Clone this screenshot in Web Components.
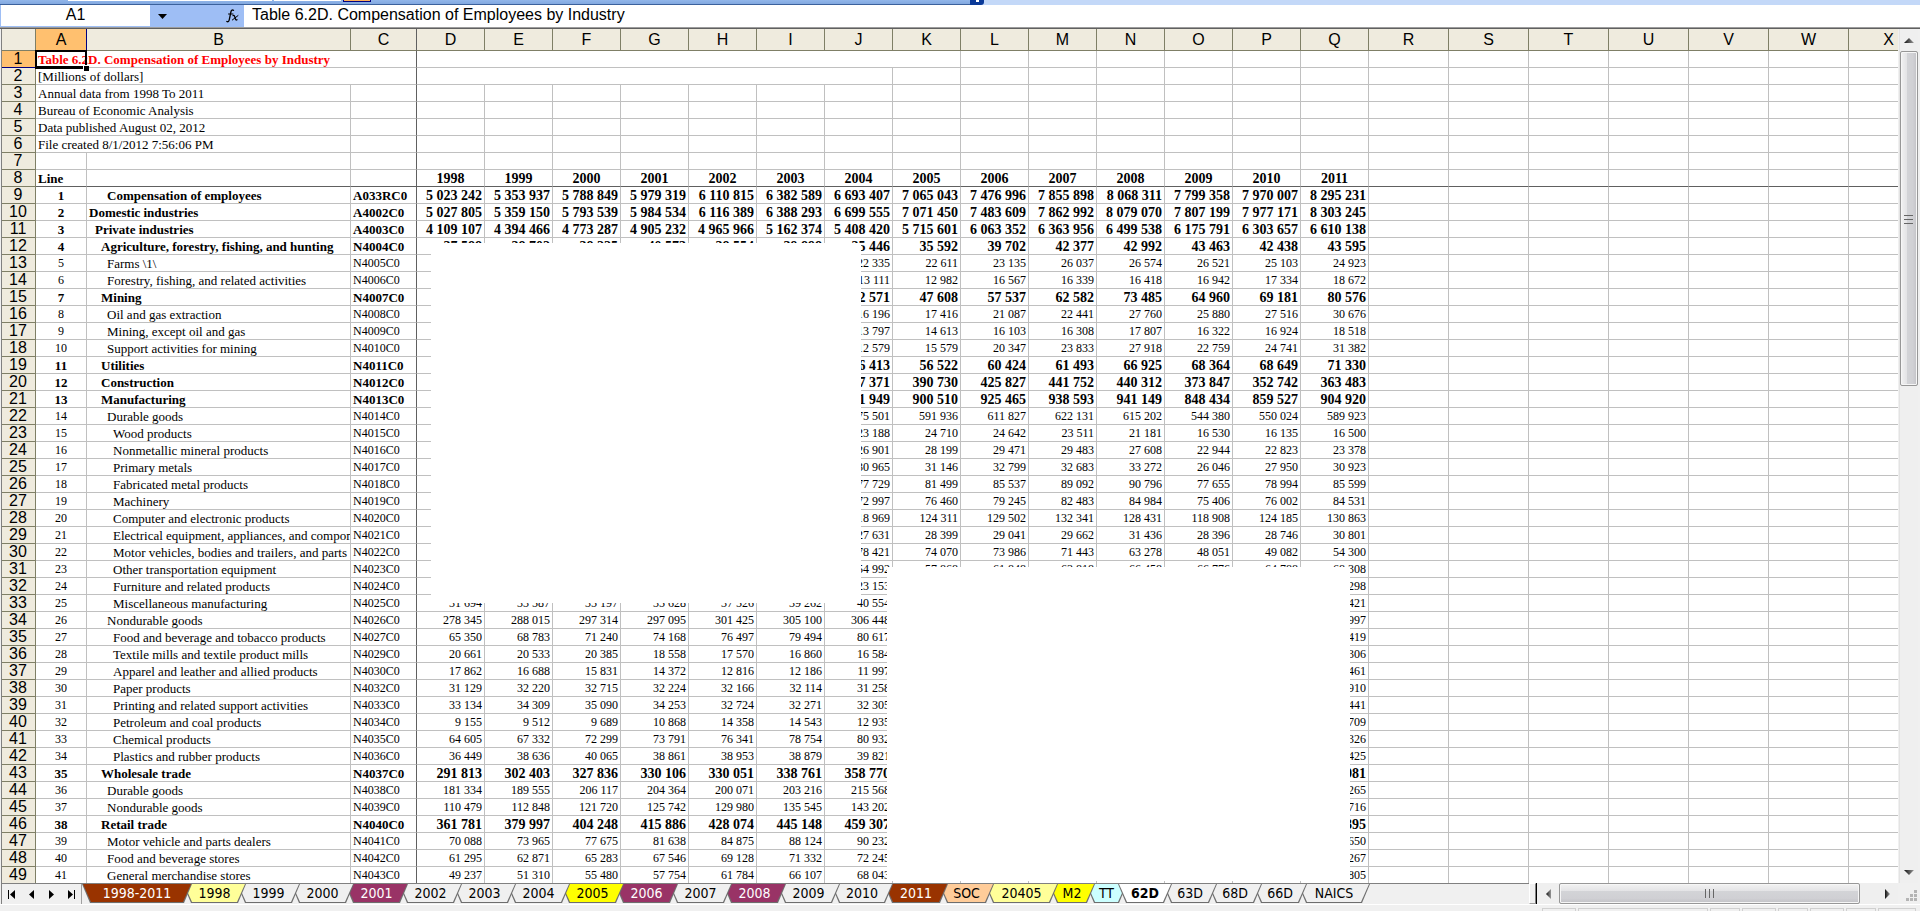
<!DOCTYPE html>
<html lang="en">
<head>
<meta charset="utf-8">
<title>Table 6.2D. Compensation of Employees by Industry</title>
<style>
  html, body { margin: 0; height: 100%; }
  body { background: #f0f0f0; overflow: hidden; font-family: "Liberation Sans", Arial, sans-serif; }
</style>
</head>
<body>
<workbook-window></workbook-window>

<script>
const define = (name, html, setup) => customElements.define(name, class extends HTMLElement {
  connectedCallback() {
    if (this.shadowRoot) return;
    const root = this.attachShadow({ mode: 'open' });
    root.innerHTML = typeof html === 'function' ? html(this) : html;
    if (setup) setup(root, this);
  }
});

/* ---------- bottom edge of the docked toolbar ---------- */
define('toolbar-edge', `
<style>
  :host { display: flex; height: 5px; background: #c3d8f8; }
  .dock { display: flex; align-items: flex-start; box-sizing: border-box; width: 970px; padding-left: 68px; gap: 2px;
          background: linear-gradient(#92b6ea, #82a8e0); border-bottom: 1px solid #3b619c; }
  .field { width: 204px; height: 1px; background: #fff; }
  .field.short { width: 67px; }
  .hot { box-sizing: border-box; width: 28px; height: 2px; background: #ffb05c; border: 1px solid #000080; border-top: 0; }
  .cap { width: 14px; background: #0b3a98; border-radius: 0 0 3px 0; display: flex; justify-content: center; }
  .cap i { width: 3px; height: 2px; background: #fff; }
</style>
<div class="dock"><span class="field"></span><span class="field short"></span><span class="hot"></span></div>
<div class="cap"><i></i></div>`);

/* ---------- name box and formula line ---------- */
define('formula-bar', `
<style>
  :host { display: flex; height: 22px; background: #9ebef5; border-bottom: 1px solid #9c9c9c; box-shadow: 0 1px 0 #606060; margin-bottom: 1px; }
  input { box-sizing: border-box; border: 0; border-radius: 0; outline: 0; margin: 0; background: #fff; color: #000;
          font: 16px/20px "Liberation Sans", Arial, sans-serif; }
  .name { width: 149px; height: 21px; margin-left: 1px; padding: 0 0 1px; text-align: center; }
  .text { flex: 1; min-width: 0; height: 22px; padding: 0 8px 2px; }
  button { border: 0; padding: 0; background: none; display: grid; place-items: center; }
  .drop { width: 24px; }
  .fx { width: 26px; margin-left: 44px; padding-left: 4px; }
</style>
<input class="name" aria-label="Name box" value="A1">
<button class="drop" aria-label="Open name list"><svg width="9" height="5" viewBox="0 0 9 5"><path d="M0 0h9L4.500 5z"/></svg></button>
<button class="fx" aria-label="Insert function"><svg width="14" height="14" viewBox="0 0 14 14" fill="none" stroke="#000" stroke-linecap="round">
  <path stroke-width="1.300" d="M7.500 1.300C6 .4 5.200 1.500 4.900 3L3.300 10.500C3 12.300 2 13.200.8 12.500"/>
  <path d="M2.500 5h4.500"/><path stroke-width="1.300" d="M7.100 6.600c1-.5 1.400 0 1.900 2s.9 2.900 2 2.200"/><path d="M12 6.600L6.300 11"/></svg></button>
<input class="text" aria-label="Formula" value="Table 6.2D. Compensation of Employees by Industry">`);

/* ---------- worksheet ---------- */
const COLS = 'ABCDEFGHIJKLMNOPQRSTUVWX'.split('');
const YEARS = Array.from({ length: 14 }, (_, i) => 1998 + i);
// label | code | indent | bold | values from column D on
const DATA = `
Compensation of employees|A033RC0|3|b|5 023 242,5 353 937,5 788 849,5 979 319,6 110 815,6 382 589,6 693 407,7 065 043,7 476 996,7 855 898,8 068 311,7 799 358,7 970 007,8 295 231
Domestic industries|A4002C0|0|b|5 027 805,5 359 150,5 793 539,5 984 534,6 116 389,6 388 293,6 699 555,7 071 450,7 483 609,7 862 992,8 079 070,7 807 199,7 977 171,8 303 245
Private industries|A4003C0|1|b|4 109 107,4 394 466,4 773 287,4 905 232,4 965 966,5 162 374,5 408 420,5 715 601,6 063 352,6 363 956,6 499 538,6 175 791,6 303 657,6 610 138
Agriculture, forestry, fishing, and hunting|N4004C0|2|b|37 588,38 702,38 225,40 573,38 554,39 898,35 446,35 592,39 702,42 377,42 992,43 463,42 438,43 595
Farms \\1\\|N4005C0|3||,,,,,,22 335,22 611,23 135,26 037,26 574,26 521,25 103,24 923
Forestry, fishing, and related activities|N4006C0|3||,,,,,,13 111,12 982,16 567,16 339,16 418,16 942,17 334,18 672
Mining|N4007C0|2|b|,,,,,,42 571,47 608,57 537,62 582,73 485,64 960,69 181,80 576
Oil and gas extraction|N4008C0|3||,,,,,,16 196,17 416,21 087,22 441,27 760,25 880,27 516,30 676
Mining, except oil and gas|N4009C0|3||,,,,,,13 797,14 613,16 103,16 308,17 807,16 322,16 924,18 518
Support activities for mining|N4010C0|3||,,,,,,12 579,15 579,20 347,23 833,27 918,22 759,24 741,31 382
Utilities|N4011C0|2|b|,,,,,,56 413,56 522,60 424,61 493,66 925,68 364,68 649,71 330
Construction|N4012C0|2|b|,,,,,,367 371,390 730,425 827,441 752,440 312,373 847,352 742,363 483
Manufacturing|N4013C0|2|b|,,,,,,891 949,900 510,925 465,938 593,941 149,848 434,859 527,904 920
Durable goods|N4014C0|3||,,,,,,575 501,591 936,611 827,622 131,615 202,544 380,550 024,589 923
Wood products|N4015C0|4||,,,,,,23 188,24 710,24 642,23 511,21 181,16 530,16 135,16 500
Nonmetallic mineral products|N4016C0|4||,,,,,,26 901,28 199,29 471,29 483,27 608,22 944,22 823,23 378
Primary metals|N4017C0|4||,,,,,,30 965,31 146,32 799,32 683,33 272,26 046,27 950,30 923
Fabricated metal products|N4018C0|4||,,,,,,77 729,81 499,85 537,89 092,90 796,77 655,78 994,85 599
Machinery|N4019C0|4||,,,,,,72 997,76 460,79 245,82 483,84 984,75 406,76 002,84 531
Computer and electronic products|N4020C0|4||,,,,,,118 969,124 311,129 502,132 341,128 431,118 908,124 185,130 863
Electrical equipment, appliances, and components|N4021C0|4||,,,,,,27 631,28 399,29 041,29 662,31 436,28 396,28 746,30 801
Motor vehicles, bodies and trailers, and parts|N4022C0|4||,,,,,,78 421,74 070,73 986,71 443,63 278,48 051,49 082,54 300
Other transportation equipment|N4023C0|4||,,,,,,54 992,57 868,61 848,63 818,66 458,66 776,64 788,68 308
Furniture and related products|N4024C0|4||,,,,,,23 153,,,,,,,298
Miscellaneous manufacturing|N4025C0|4||31 694,33 587,35 197,35 628,37 526,39 262,40 554,,,,,,,421
Nondurable goods|N4026C0|3||278 345,288 015,297 314,297 095,301 425,305 100,306 448,,,,,,,997
Food and beverage and tobacco products|N4027C0|4||65 350,68 783,71 240,74 168,76 497,79 494,80 617,,,,,,,419
Textile mills and textile product mills|N4029C0|4||20 661,20 533,20 385,18 558,17 570,16 860,16 584,,,,,,,306
Apparel and leather and allied products|N4030C0|4||17 862,16 688,15 831,14 372,12 816,12 186,11 997,,,,,,,461
Paper products|N4032C0|4||31 129,32 220,32 715,32 224,32 166,32 114,31 258,,,,,,,910
Printing and related support activities|N4033C0|4||33 134,34 309,35 090,34 253,32 724,32 271,32 305,,,,,,,441
Petroleum and coal products|N4034C0|4||9 155,9 512,9 689,10 868,14 358,14 543,12 935,,,,,,,709
Chemical products|N4035C0|4||64 605,67 332,72 299,73 791,76 341,78 754,80 932,,,,,,,326
Plastics and rubber products|N4036C0|4||36 449,38 636,40 065,38 861,38 953,38 879,39 821,,,,,,,425
Wholesale trade|N4037C0|2|b|291 813,302 403,327 836,330 106,330 051,338 761,358 770,,,,,,,981
Durable goods|N4038C0|3||181 334,189 555,206 117,204 364,200 071,203 216,215 568,,,,,,,265
Nondurable goods|N4039C0|3||110 479,112 848,121 720,125 742,129 980,135 545,143 202,,,,,,,716
Retail trade|N4040C0|2|b|361 781,379 997,404 248,415 886,428 074,445 148,459 307,,,,,,,395
Motor vehicle and parts dealers|N4041C0|3||70 088,73 965,77 675,81 638,84 875,88 124,90 232,,,,,,,650
Food and beverage stores|N4042C0|3||61 295,62 871,65 283,67 546,69 128,71 332,72 245,,,,,,,267
General merchandise stores|N4043C0|3||49 237,51 310,55 480,57 754,61 784,66 107,68 043,,,,,,,805
`.trim().split('\n').map(l => l.split('|'));

const blanks = n => '<td></td>'.repeat(n);
const tr = (n, cells, cls = '') => `<tr class="${cls}"><th scope="row"${n === 1 ? ' class="on"' : ''}>${n}</th>${cells}</tr>`;

function sheetRows() {
  const out = [];
  out.push(tr(1, `<td colspan="3" class="title c">Table 6.2D. Compensation of Employees by Industry<i class="cursor"></i></td><td colspan="8"></td>${blanks(13)}`));
  out.push(tr(2, `<td colspan="3" class="c">[Millions of dollars]</td><td colspan="7"></td>${blanks(14)}`));
  ['Annual data from 1998 To 2011', 'Bureau of Economic Analysis', 'Data published August 02, 2012', 'File created 8/1/2012 7:56:06 PM']
    .forEach((t, i) => out.push(tr(3 + i, `<td colspan="2">${t}</td><td class="c"></td>${blanks(21)}`)));
  out.push(tr(7, `${blanks(2)}<td class="c"></td>${blanks(21)}`));
  out.push(tr(8, `<td>Line</td><td></td><td class="c"></td>${YEARS.map(y => `<td class="mid">${y}</td>`).join('')}${blanks(7)}`, 'b freeze'));
  DATA.forEach(([label, code, indent, bold, values], i) => out.push(tr(9 + i,
    `<td class="mid num">${i + 1}</td><td class="in${indent}">${label}</td><td class="c code">${code}</td>` +
    values.split(',').map(v => `<td class="num">${v}</td>`).join('') + blanks(7), bold)));
  return out.join('');
}

define('sheet-grid', () => `
<style>
  :host { display: block; position: relative; overflow: hidden; background: #fff; border-left: 1px solid #808080; margin-left: 1px; }
  table { table-layout: fixed; width: 1927px; border-collapse: separate; border-spacing: 0; font: 13px/15px "Liberation Serif", "Times New Roman", serif; color: #000; }
  .rh { width: 34px } .ca { width: 51px } .cb { width: 264px } .cc { width: 66px } .cy { width: 68px } .cx { width: 80px }
  th, td { box-sizing: border-box; height: 17px; padding: 1px 2px 0; overflow: hidden; white-space: nowrap; text-align: left;
           border: 0 solid #c0c0c0; border-width: 0 1px 1px 0; }
  th { background: #efebde; border-color: #7f7f66; font: 16px/16px "Liberation Sans", Arial, sans-serif; text-align: center; padding: 0; }
  thead th { height: 22px; line-height: 20px; padding-top: 1px; }
  tbody th { padding-right: 1px; }
  th.on { background: #ffc06f; border-color: #000080; }
  .c { border-right-color: #606060; }
  .b td { font-weight: bold; }
  .freeze td { border-bottom-color: #606060; }
  .mid, td.mid.num { text-align: center; }
  .num { text-align: right; }
  .num, .code { font-size: 12px; }
  .b .num { font-size: 14px; }
  .b .mid.num, .b .code { font-size: 13px; }
  .freeze .mid { font-size: 14px; }
  .in1 { padding-left: 8px } .in2 { padding-left: 14px } .in3 { padding-left: 20px } .in4 { padding-left: 26px }
  .title { position: relative; overflow: visible; color: #f00; font-weight: bold; }
  .cursor { position: absolute; box-sizing: border-box; left: -1px; top: -1px; width: 52px; height: 19px; border: 2px solid #000; border-bottom-width: 3px; }
  .cursor::after { content: ""; position: absolute; right: -4px; bottom: -5px; width: 5px; height: 5px; background: #000; border: 1px solid #fff; border-width: 1px 0 0 1px; }
  .patch { position: absolute; background: #fff; }
  .p1 { left: 429px; top: 214px; width: 430px; height: 360px; }
  .p2 { left: 885px; top: 538px; width: 463px; height: 314px; }
</style>
<table>
  <colgroup><col class="rh"><col class="ca"><col class="cb"><col class="cc">${'<col class="cy">'.repeat(14)}${'<col class="cx">'.repeat(7)}</colgroup>
  <thead><tr><th></th>${COLS.map(c => `<th scope="col" class="${c === 'A' ? 'on' : c === 'C' ? 'c' : ''}">${c}</th>`).join('')}</tr></thead>
  <tbody>${sheetRows()}</tbody>
</table>
<div class="patch p1"></div><div class="patch p2"></div>`);

/* ---------- scroll bars ---------- */
define('scroll-bar', host => {
  const v = host.hasAttribute('vertical');
  const arrow = d => `<svg width="10" height="10" viewBox="0 0 10 10"><defs><linearGradient id="g"><stop stop-color="#111"/><stop offset="1" stop-color="#999"/></linearGradient></defs><path fill="url(#g)" d="${d}"/></svg>`;
  return `
<style>
  :host { display: flex; background: #efefef; }
  :host([vertical]) { flex-direction: column; width: 18px; border-left: 1px solid #e3e3e3; }
  button { flex: none; border: 0; padding: 0; background: none; display: grid; place-items: center; width: 22px; }
  :host([vertical]) button { width: 18px; height: 22px; }
  :host([vertical]) button:last-child { height: 20px; }
  .thumb { box-sizing: border-box; display: grid; place-items: center; border: 1px solid #979797; border-radius: 2px; box-shadow: inset 0 0 0 1px #f6f6f6;
           flex: ${v ? '334 0 0' : '301 0 0'}; background: linear-gradient(${v ? '90deg' : '180deg'}, #f2f2f2, #e4e4e6 35%, #d3d4d7 36%, #d0d0d4 75%, #c2c2c6); }
  .rest { flex: ${v ? '478 0 0' : '16 0 0'}; }
</style>
<button aria-label="${v ? 'Up' : 'Left'}">${arrow(v ? 'M0 8h10L5 3z' : 'M8 0v10L3 5z')}</button>
<div class="thumb"><svg width="10" height="10" viewBox="0 0 10 10" stroke="#666" fill="none"><path d="${v ? 'M0 1.500h9M0 5.500h9M0 9.500h9' : 'M.5 0v9M4.500 0v9M8.500 0v9'}"/></svg></div>
<div class="rest"></div>
<button aria-label="${v ? 'Down' : 'Right'}">${arrow(v ? 'M0 2h10L5 7z' : 'M3 0v10l5-5z')}</button>`;
});

/* ---------- sheet tabs ---------- */
define('sheet-tab', `
<style>
  :host { display: block; position: relative; flex: none; width: var(--w, 63px); margin-left: -9px; }
  :host(:first-child) { margin-left: 0; }
  :host([active]) { z-index: 100 !important; }
  button { position: relative; width: 100%; height: 100%; border: 0; padding: 0 0 1px; background: #6e6e6e; color: var(--ink, #000);
           font: 14px/18px "DejaVu Sans Condensed", "DejaVu Sans", Tahoma, sans-serif; text-align: center; white-space: nowrap;
           clip-path: polygon(0 0, 100% 0, calc(100% - 8px) 100%, 8px 100%); }
  button::before { content: ""; position: absolute; inset: 0 1px 1px; background: var(--fill, #f0f0f0);
           clip-path: polygon(0 0, 100% 0, calc(100% - 8px) 100%, 8px 100%); }
  span { position: relative; }
  :host([active]) button { font-weight: bold; }
</style>
<button role="tab"><span><slot></slot></span></button>`);

const TABS = [['1998-2011', 110, '#993300', 1], ['1998', 63, '#ffff99'], ['1999', 63], ['2000', 63], ['2001', 63, '#993366', 1], ['2002', 63], ['2003', 63],
  ['2004', 63], ['2005', 63, '#ffff00'], ['2006', 63, '#993366', 1], ['2007', 63], ['2008', 63, '#993366', 1], ['2009', 63], ['2010', 62],
  ['2011', 64, '#993300', 1], ['SOC', 55, '#ffcc99'], ['20405', 73, '#ffff99'], ['M2', 46, '#ffff00'], ['TT', 41, '#ccffff'], ['62D', 54, '#fff', 0, 1],
  ['63D', 54], ['68D', 54], ['66D', 54], ['NAICS', 72]];
const nav = (label, d) => `<button aria-label="${label}"><svg width="8" height="9" viewBox="0 0 8 9"><path d="${d}"/></svg></button>`;

define('tab-strip', `
<style>
  :host { display: flex; height: 21px; background: #f0f0f0; }
  .left { flex: 1; min-width: 0; display: flex; border-top: 1px solid #808080; margin-left: 1px; border-left: 1px solid #808080; }
  .nav { display: flex; width: 79px; border-right: 1px solid #a0a0a0; }
  .nav button { flex: 1; border: 0; padding: 0; background: none; display: grid; place-items: center; }
  .tabs { display: flex; height: 19px; }
  .split { width: 7px; box-sizing: border-box; background: #f0f0f0; border: 1px solid #fff; border-right-color: #808080; border-bottom-color: #a0a0a0; }
  .bar { width: 1px; background: #000; }
  scroll-bar { width: 361px; }
  .grip { width: 22px; display: flex; align-items: flex-end; padding-bottom: 2px; }
</style>
<div class="left">
  <div class="nav">
    ${nav('First sheet', 'M0 0h1v9H0zM7 0v9L2 4.500z')}${nav('Previous sheet', 'M6 0v9L1 4.500z')}
    ${nav('Next sheet', 'M2 0v9l5-4.500z')}${nav('Last sheet', 'M1 0v9l5-4.500zM7 0h1v9H7z')}
  </div>
  <div class="tabs" role="tablist">${TABS.map(([t, w, fill, light, on], i) =>
    `<sheet-tab${on ? ' active' : ''} style="--w:${w}px;z-index:${40 - i}${fill ? ';--fill:' + fill : ''}${light ? ';--ink:#fff' : ''}">${t}</sheet-tab>`).join('')}</div>
</div>
<div class="split"></div><div class="bar"></div>
<scroll-bar></scroll-bar>
<div class="grip"><svg width="20" height="12" viewBox="0 0 20 12" fill="#b4b4b4"><path d="M16 0h3v3h-3zM12 4h3v3h-3zM16 4h3v3h-3zM8 8h3v3H8zM12 8h3v3h-3zM16 8h3v3h-3z"/></svg></div>`);

/* ---------- status bar ---------- */
define('status-bar', `
<style>
  :host { display: flex; justify-content: flex-end; box-sizing: border-box; height: 7px; padding: 3px 4px 0 0; gap: 2px; background: #f0f0f0; border-top: 1px solid #fff; }
  i { box-sizing: border-box; border: 1px solid #d0d0d0; border-bottom: 0; width: 30px; }
  .m { width: 34px; } .l { width: 38px; } .xl { width: 130px; }
</style>
<i class="m"></i><i class="xl"></i><i></i><i class="m"></i><i></i><i class="m"></i><i></i><i class="l"></i>`);

/* ---------- window ---------- */
define('workbook-window', `
<style>
  :host { display: flex; flex-direction: column; height: 100vh; overflow: hidden; }
  main { flex: 1; min-height: 0; display: flex; }
  sheet-grid { flex: 1; min-width: 0; }
  scroll-bar { margin: 0 2px 0 1px; }
  toolbar-edge, formula-bar, tab-strip, status-bar { flex: none; }
</style>
<toolbar-edge></toolbar-edge>
<formula-bar></formula-bar>
<main><sheet-grid></sheet-grid><scroll-bar vertical></scroll-bar></main>
<tab-strip></tab-strip>
<status-bar></status-bar>`);
</script>
</body>
</html>
